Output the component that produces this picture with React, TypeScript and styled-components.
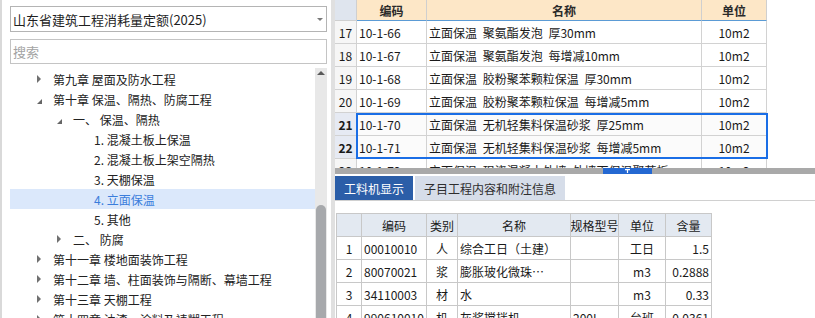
import React from "react";
import styled, { createGlobalStyle, css } from "styled-components";

const Global = createGlobalStyle`
  html, body { margin: 0; padding: 0; background: #fff; overflow: hidden; }
  body { font-family: "Noto Sans CJK SC", "Noto Sans", sans-serif; color: #222; }
  * { box-sizing: border-box; }
`;

const Page = styled.div`
  display: flex;
  width: 815px;
  height: 318px;
  overflow: hidden;
  background: #fff;
`;

/* ---------- left panel ---------- */
const LeftPanel = styled.div`
  width: 331px;
  flex-shrink: 0;
  display: flex;
  flex-direction: column;
  border-left: 2px solid #d9d9d9;
  padding: 6px 4px 0 8px;
`;

const Select = styled.div`
  height: 26px;
  border: 1px solid #b4b4b4;
  display: flex;
  align-items: center;
  padding-left: 2px;
  font-size: 13px;
  color: #1f1f1f;
  flex-shrink: 0;
`;

const Caret = styled.span`
  margin-left: auto;
  margin-right: 3px;
  width: 0;
  height: 0;
  border-left: 3px solid transparent;
  border-right: 3px solid transparent;
  border-top: 3px solid #7a7a7a;
`;

const Search = styled.input`
  margin-top: 7px;
  height: 25px;
  border: 1px solid #c4c4c4;
  padding: 0 2px;
  font-family: inherit;
  font-size: 13px;
  outline: none;
  flex-shrink: 0;
  &::placeholder { color: #a3a3a3; }
`;

const TreeArea = styled.div`
  margin-top: 4px;
  flex: 1;
  display: flex;
  min-height: 0;
  overflow: hidden;
`;

const TreeList = styled.div`
  flex: 1;
  padding-top: 1px;
`;

const TreeRow = styled.div<{ $indent: number; $selected?: boolean }>`
  height: 20px;
  display: flex;
  align-items: center;
  padding-left: ${(p) => p.$indent}px;
  font-size: 12px;
  white-space: nowrap;
  color: ${(p) => (p.$selected ? "#3a7ddb" : "#222")};
  background: ${(p) => (p.$selected ? "#dbe8fb" : "transparent")};
`;

const ArrowSlot = styled.span`
  width: 16px;
  height: 20px;
  flex-shrink: 0;
  display: flex;
  align-items: center;
`;

const Arrow = styled.span<{ $open?: boolean }>`
  width: 0;
  height: 0;
  ${(p) =>
    p.$open
      ? css`
          margin-top: 4px;
          border-left: 5px solid transparent;
          border-bottom: 5px solid #666;
        `
      : css`
          border-top: 4px solid transparent;
          border-bottom: 4px solid transparent;
          border-left: 4px solid #707070;
        `}
`;

const VScroll = styled.div`
  width: 12px;
  flex-shrink: 0;
  background: #e8e8e8;
  display: flex;
  flex-direction: column;
  align-items: center;
`;

const UpArrow = styled.span`
  margin-top: 3px;
  width: 0;
  height: 0;
  border-left: 4px solid transparent;
  border-right: 4px solid transparent;
  border-bottom: 4px solid #5a5a5a;
`;

const Thumb = styled.div`
  margin-top: 130px;
  width: 10px;
  flex: 1;
  background: #a7a9ac;
  border-radius: 5px 5px 0 0;
`;

const Divider = styled.div`
  width: 4px;
  flex-shrink: 0;
  background: #e0e0e0;
`;

/* ---------- right panel ---------- */
const RightPanel = styled.div`
  flex: 1;
  min-width: 0;
  display: flex;
  flex-direction: column;
`;

const TopGrid = styled.div`
  height: 168px;
  flex-shrink: 0;
  position: relative;
  overflow: hidden;
`;

const GridRow = styled.div<{ $h: number }>`
  display: flex;
  height: ${(p) => p.$h}px;
`;

const HeadCell = styled.div<{ $w: number; $corner?: boolean }>`
  width: ${(p) => p.$w}px;
  flex-shrink: 0;
  display: flex;
  align-items: center;
  justify-content: center;
  font-size: 12px;
  font-weight: 700;
  color: #2a2a2a;
  background: ${(p) => (p.$corner ? "#dfe5ee" : "#fde7c7")};
  border-right: 1px solid #cfcfcf;
  border-bottom: 1px solid ${(p) => (p.$corner ? "#cfcfcf" : "#5b9bd5")};
`;

const Cell = styled.div<{ $w: number; $align?: string; $bg?: string; $bold?: boolean }>`
  width: ${(p) => p.$w}px;
  flex-shrink: 0;
  display: flex;
  align-items: center;
  justify-content: ${(p) => p.$align || "flex-start"};
  padding: 0 2px;
  font-size: 12px;
  white-space: pre;
  word-spacing: 3px;
  overflow: hidden;
  color: #1a1a1a;
  font-weight: ${(p) => (p.$bold ? 700 : 400)};
  background: ${(p) => p.$bg || "#fff"};
  border-right: 1px solid #d2d2d2;
  border-bottom: 1px solid #d2d2d2;
`;

const SelectionFrame = styled.div`
  position: absolute;
  left: 21px;
  top: 113px;
  width: 412px;
  height: 46px;
  border: 2px solid #1a6ee6;
  pointer-events: none;
`;

const Splitter = styled.div`
  height: 6px;
  flex-shrink: 0;
  background: #a9a9a9;
  padding-left: 268px;
  display: flex;
`;

const SplitThumb = styled.div`
  width: 49px;
  height: 6px;
  background: #2468d2;
  display: flex;
  align-items: center;
  justify-content: center;
`;

const Tabs = styled.div`
  margin-top: 2px;
  display: flex;
  gap: 2px;
  height: 25px;
  flex-shrink: 0;
  border-bottom: 1px solid #d0d0d0;
`;

const Tab = styled.div<{ $active?: boolean }>`
  height: 24px;
  padding: 0 9px;
  display: flex;
  align-items: center;
  font-size: 12px;
  color: ${(p) => (p.$active ? "#fff" : "#2e2e2e")};
  background: ${(p) => (p.$active ? "#2b5ea8" : "#d6dde9")};
`;

const LowerTable = styled.div`
  margin-top: 12px;
  margin-left: 1px;
  width: 376px;
  border-left: 1px solid #c8c8c8;
  border-top: 1px solid #c8c8c8;
`;

const LRow = styled.div<{ $h: number }>`
  display: flex;
  height: ${(p) => p.$h}px;
`;

const LCell = styled.div<{ $w: number; $align?: string; $head?: boolean }>`
  width: ${(p) => p.$w}px;
  flex-shrink: 0;
  display: flex;
  align-items: center;
  justify-content: ${(p) => p.$align || "flex-start"};
  padding: 0 2px;
  font-size: 12px;
  white-space: nowrap;
  overflow: hidden;
  color: #1a1a1a;
  background: ${(p) => (p.$head ? "#e3e9f1" : "#fff")};
  border-right: 1px solid #c8c8c8;
  border-bottom: 1px solid #c8c8c8;
`;

/* ---------- data ---------- */
type TreeItem = { text: string; level: number; arrow?: "open" | "closed"; selected?: boolean };

const tree: TreeItem[] = [
  { text: "第九章 屋面及防水工程", level: 0, arrow: "closed" },
  { text: "第十章 保温、隔热、防腐工程", level: 0, arrow: "open" },
  { text: "一、 保温、隔热", level: 1, arrow: "open" },
  { text: "1. 混凝土板上保温", level: 2 },
  { text: "2. 混凝土板上架空隔热", level: 2 },
  { text: "3. 天棚保温", level: 2 },
  { text: "4. 立面保温", level: 2, selected: true },
  { text: "5. 其他", level: 2 },
  { text: "二、 防腐", level: 1, arrow: "closed" },
  { text: "第十一章 楼地面装饰工程", level: 0, arrow: "closed" },
  { text: "第十二章 墙、柱面装饰与隔断、幕墙工程", level: 0, arrow: "closed" },
  { text: "第十三章 天棚工程", level: 0, arrow: "closed" },
  { text: "第十四章 油漆、涂料及裱糊工程", level: 0, arrow: "closed" },
];

const topCols = [22, 70, 275, 65];

const quotas = [
  { n: 17, code: "10-1-66", name: "立面保温 聚氨酯发泡 厚30mm" },
  { n: 18, code: "10-1-67", name: "立面保温 聚氨酯发泡 每增减10mm" },
  { n: 19, code: "10-1-68", name: "立面保温 胶粉聚苯颗粒保温 厚30mm" },
  { n: 20, code: "10-1-69", name: "立面保温 胶粉聚苯颗粒保温 每增减5mm" },
  { n: 21, code: "10-1-70", name: "立面保温 无机轻集料保温砂浆 厚25mm", sel: true },
  { n: 22, code: "10-1-71", name: "立面保温 无机轻集料保温砂浆 每增减5mm", sel: true },
  { n: 23, code: "10-1-72", name: "立面保温 现浇混凝土外墙 外墙面保温聚苯板" },
];

const lowCols = [25, 65, 31, 113, 48, 47, 46];
const lowHead = ["", "编码", "类别", "名称", "规格型号", "单位", "含量"];
const lowRows = [
  ["1", "00010010", "人", "综合工日（土建）", "", "工日", "1.5"],
  ["2", "80070021", "浆", "膨胀玻化微珠…", "", "m3", "0.2888"],
  ["3", "34110003", "材", "水", "", "m3", "0.33"],
  ["4", "990610010", "机", "灰浆搅拌机", "200L", "台班", "0.0361"],
];
const lowAlign = ["center", "flex-start", "center", "flex-start", "flex-start", "center", "flex-end"];

export default function App() {
  return (
    <>
      <Global />
      <Page>
        <LeftPanel>
          <Select>
            <span>山东省建筑工程消耗量定额(2025)</span>
            <Caret />
          </Select>
          <Search placeholder="搜索" />
          <TreeArea>
            <TreeList>
              {tree.map((t, i) => (
                <TreeRow key={i} $indent={t.arrow ? 27 + t.level * 20 : 28 + t.level * 20} $selected={t.selected}>
                  <ArrowSlot>{t.arrow && <Arrow $open={t.arrow === "open"} />}</ArrowSlot>
                  <span>{t.text}</span>
                </TreeRow>
              ))}
            </TreeList>
            <VScroll>
              <UpArrow />
              <Thumb />
            </VScroll>
          </TreeArea>
        </LeftPanel>
        <Divider />
        <RightPanel>
          <TopGrid>
            <GridRow $h={21}>
              <HeadCell $w={topCols[0]} $corner />
              <HeadCell $w={topCols[1]}>编码</HeadCell>
              <HeadCell $w={topCols[2]}>名称</HeadCell>
              <HeadCell $w={topCols[3]}>单位</HeadCell>
            </GridRow>
            {quotas.map((q) => (
              <GridRow $h={23} key={q.n}>
                <Cell $w={topCols[0]} $align="center" $bg={q.sel ? "#e6eaf3" : "#f6f6f6"} $bold={q.sel}>
                  {q.n}
                </Cell>
                <Cell $w={topCols[1]} $bg={q.sel ? "#fbfbfb" : undefined}>{q.code}</Cell>
                <Cell $w={topCols[2]} $bg={q.sel ? "#fbfbfb" : undefined}>{q.name}</Cell>
                <Cell $w={topCols[3]} $align="center" $bg={q.sel ? "#fbfbfb" : undefined}>10m2</Cell>
              </GridRow>
            ))}
            <SelectionFrame />
          </TopGrid>
          <Splitter>
            <SplitThumb>
              <svg width="5" height="4" viewBox="0 0 5 4">
                <path d="M0 0H5V1.2H3.1V4H1.9V1.2H0Z" fill="#fff" />
              </svg>
            </SplitThumb>
          </Splitter>
          <Tabs>
            <Tab $active>工料机显示</Tab>
            <Tab>子目工程内容和附注信息</Tab>
          </Tabs>
          <LowerTable>
            <LRow $h={23}>
              {lowHead.map((h, i) => (
                <LCell key={i} $w={lowCols[i]} $align="center" $head>
                  {h}
                </LCell>
              ))}
            </LRow>
            {lowRows.map((r, ri) => (
              <LRow $h={23} key={ri}>
                {r.map((c, i) => (
                  <LCell key={i} $w={lowCols[i]} $align={lowAlign[i]}>
                    {c}
                  </LCell>
                ))}
              </LRow>
            ))}
          </LowerTable>
        </RightPanel>
      </Page>
    </>
  );
}
